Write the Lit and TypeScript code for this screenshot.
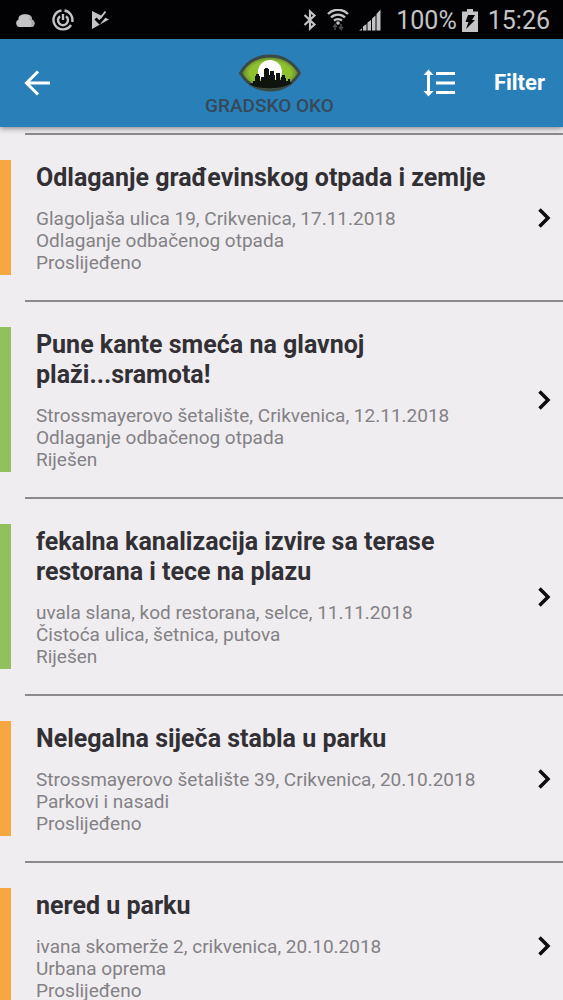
import { LitElement, html, css } from "lit";
import { customElement, property } from "lit/decorators.js";
import { classMap } from "lit/directives/class-map.js";

interface Report {
  title: string;
  place: string;
  category: string;
  status: string;
}

const REPORTS: Report[] = [
  {
    title: "Odlaganje građevinskog otpada i zemlje",
    place: "Glagoljaša ulica 19, Crikvenica, 17.11.2018",
    category: "Odlaganje odbačenog otpada",
    status: "Proslijeđeno",
  },
  {
    title: "Pune kante smeća na glavnoj plaži...sramota!",
    place: "Strossmayerovo šetalište, Crikvenica, 12.11.2018",
    category: "Odlaganje odbačenog otpada",
    status: "Riješen",
  },
  {
    title: "fekalna kanalizacija izvire sa terase restorana i tece na plazu",
    place: "uvala slana, kod restorana, selce, 11.11.2018",
    category: "Čistoća ulica, šetnica, putova",
    status: "Riješen",
  },
  {
    title: "Nelegalna siječa stabla u parku",
    place: "Strossmayerovo šetalište 39, Crikvenica, 20.10.2018",
    category: "Parkovi i nasadi",
    status: "Proslijeđeno",
  },
  {
    title: "nered u parku",
    place: "ivana skomerže 2, crikvenica, 20.10.2018",
    category: "Urbana oprema",
    status: "Proslijeđeno",
  },
];

@customElement("status-bar")
export class StatusBar extends LitElement {
  static styles = css`
    :host {
      display: flex;
      flex: none;
      align-items: center;
      justify-content: space-between;
      height: 39px;
      padding: 3px 13px 0 14px;
      box-sizing: border-box;
      background: #020204;
      color: #c4c3c6;
      font-size: 25px;
      line-height: 30px;
    }
    .group {
      display: flex;
      align-items: center;
    }
    .notices {
      gap: 16px;
    }
    .system {
      gap: 10px;
    }
    .power {
      display: flex;
      align-items: center;
      gap: 5px;
      margin-left: 5px;
    }
    svg {
      display: block;
      fill: currentColor;
    }
  `;

  render() {
    return html`
      <div class="group notices">
        <svg width="22" height="24" viewBox="0 0 22 24" aria-hidden="true">
          <path d="M5 18a4 4 0 0 1-.5-7.500A4.500 4.500 0 0 1 7 6C8 5 14 5 15.500 6a5 5 0 0 1 2.500 4.500a4 4 0 0 1 0 7.500z" />
          <path d="M15.500 6a5 5 0 0 1 2.500 4.500a4 4 0 0 1 0 7.500h-2c3-3 1-7-.5-7z" fill="#a9a8ab" />
        </svg>
        <svg width="22" height="24" viewBox="0 0 22 24" aria-hidden="true">
          <g fill="none" stroke="currentColor" stroke-width="2.400">
            <path d="M9.500 1.500A9.500 9.500 0 1 0 19 16M20.200 13A9.500 9.500 0 0 0 12.500 1.500" />
            <path d="M8 7.200a5 5 0 1 0 6 0M11 5v6" />
          </g>
        </svg>
        <svg width="20" height="24" viewBox="0 0 20 24" aria-hidden="true">
          <path d="M2 2L19 10.500 2 20z" />
          <path d="M5.500 9.500l4 4 8-10" fill="none" stroke="#020204" stroke-width="3" />
          <path d="M10 9.500L15.500 2.500" fill="none" stroke="currentColor" stroke-width="2" />
        </svg>
      </div>
      <div class="group system">
        <svg width="14" height="24" viewBox="0 0 14 24" aria-hidden="true">
          <path
            d="M1.500 6l10 9.500L7 19.500V2.500l4.500 4L1.500 16"
            fill="none"
            stroke="currentColor"
            stroke-width="2.200"
          />
        </svg>
        <svg width="22" height="24" viewBox="0 0 22 24" aria-hidden="true">
          <g fill="none" stroke="currentColor" stroke-width="2.400">
            <path d="M1 5a14 14 0 0 1 20 0M4 8.500a10 10 0 0 1 14 0M7 11.700a6 6 0 0 1 8 0" />
          </g>
          <circle cx="11" cy="14" r="1.800" />
          <path
            d="M8 21v-5l-2 2M8 16l2 2M14 15v5l-2-2M14 20l2-2"
            fill="none"
            stroke="#4c4b4e"
            stroke-width="1.600"
          />
        </svg>
        <svg width="22" height="24" viewBox="0 0 22 24" aria-hidden="true">
          <path d="M0 21.500l3-2v2zM4 21.500v-4l3.500-2.500v6.500zM8.500 21.500v-8l3.500-2.500v10.500zM13 21.500V9.500l3.500-3v15zM17.500 21.500V5L21.500 0.500v21z" />
        </svg>
        <div class="power">
          <span>100%</span>
          <svg width="16" height="24" viewBox="0 0 16 24" aria-hidden="true">
            <path d="M5 0h6v2.500h5v20.500H0V2.500h5z" />
            <path d="M6 6h7l-3 5h3L4 20l2.500-7H3.500z" fill="#020204" />
          </svg>
        </div>
        <span>15:26</span>
      </div>
    `;
  }
}

@customElement("top-bar")
export class TopBar extends LitElement {
  static styles = css`
    :host {
      display: grid;
      flex: none;
      grid-template-columns: 1fr auto 1fr;
      align-items: center;
      height: 88px;
      padding: 0 18px 0 24px;
      background: #2980b9;
      box-shadow: 0 1px 6px rgba(0, 0, 0, 0.5);
      z-index: 1;
    }
    button {
      display: block;
      margin: 0;
      padding: 0;
      border: 0;
      background: none;
      color: #fff;
      font: 700 22px/28px Roboto, sans-serif;
      cursor: pointer;
    }
    svg {
      display: block;
    }
    .logo {
      display: flex;
      flex-direction: column;
      align-items: center;
      gap: 4px;
      margin: 3px 30px 0 0;
      color: #35495a;
      font: 500 19px/20px Roboto, sans-serif;
    }
    .actions {
      display: flex;
      align-items: center;
      justify-content: flex-end;
      gap: 38px;
    }
  `;

  render() {
    return html`
      <button type="button" aria-label="Natrag">
        <svg width="28" height="28" viewBox="0 0 28 28" fill="none" stroke="currentColor" stroke-width="3">
          <path d="M26 14H3M14 2.500L2.500 14 14 25.500" />
        </svg>
      </button>
      <div class="logo">
        <svg width="64" height="38" viewBox="0 0 64 38" aria-hidden="true">
          <defs>
            <radialGradient id="iris">
              <stop offset="0.700" stop-color="#8fc02e" />
              <stop offset="1" stop-color="#56782f" />
            </radialGradient>
          </defs>
          <path
            d="M2.500 19C9 8 19 2 32 2S55 8 61.500 19C55 30 45 36 32 36S9 30 2.500 19z"
            fill="url(#iris)"
            stroke="#3b4a48"
            stroke-width="3"
          />
          <circle cx="32" cy="18" r="12" fill="#fff" />
          <path
            d="M11 30l4-1v-2h2v-5h1v-2h3v2h1v5h1v-4h3v-8h1v-1h3v1h1v6h1v-4h4v4h1v5h1v-7h4v7h1v-3h1v-2h3v3h1v3h2v-2h2v3l2 1C44 36 20 36 11 30z"
            fill="#10140f"
          />
        </svg>
        <span>GRADSKO OKO</span>
      </div>
      <div class="actions">
        <button type="button" aria-label="Poredaj">
          <svg width="34" height="28" viewBox="0 0 34 28" fill="currentColor">
            <path d="M6.500 0.500L11.500 6H8v16h3.500L6.500 27.500 1.500 22H5V6H1.500z" />
            <path d="M14 3h19v3H14zM14 12.500h19v3H14zM14 22h19v3H14z" />
          </svg>
        </button>
        <button type="button">Filter</button>
      </div>
    `;
  }
}

@customElement("report-item")
export class ReportItem extends LitElement {
  @property({ attribute: false }) report!: Report;

  static styles = css`
    :host {
      display: block;
    }
    .row {
      display: block;
      color: inherit;
      text-decoration: none;
    }
    .row::before {
      content: "";
      display: block;
      margin-left: 25px;
      border-top: 2px solid #8c8a8d;
    }
    .body {
      display: flex;
      align-items: center;
      justify-content: space-between;
      gap: 36px;
      margin: 25px 0;
      padding: 3px 12px 1px 25px;
      border-left: 11px solid #f5a742;
    }
    .solved {
      border-left-color: #93c05f;
    }
    h2 {
      margin: 0 0 15px;
      color: #323034;
      font-size: 25px;
      font-weight: 700;
      line-height: 30px;
    }
    p {
      margin: 0;
      color: #838185;
      font-size: 19px;
      line-height: 22px;
    }
    svg {
      display: block;
      flex: none;
    }
  `;

  render() {
    const { title, place, category, status } = this.report;
    return html`
      <a class="row" href="#">
        <div class=${classMap({ body: true, solved: status === "Riješen" })}>
          <div>
            <h2>${title}</h2>
            <p>${place}</p>
            <p>${category}</p>
            <p>${status}</p>
          </div>
          <svg width="14" height="22" viewBox="0 0 14 22" fill="none" stroke="#0c0b0d" stroke-width="3.500" aria-hidden="true">
            <path d="M2.500 1.500L11 10l-8.500 8.500" />
          </svg>
        </div>
      </a>
    `;
  }
}

@customElement("app-root")
export class AppRoot extends LitElement {
  static styles = css`
    :host {
      display: flex;
      flex-direction: column;
      height: 100vh;
      background: #efedf0;
      font-family: Roboto, sans-serif;
    }
    .list {
      flex: 1;
      min-height: 0;
      margin: 0;
      padding: 6px 0 0;
      overflow-y: auto;
      scrollbar-width: none;
      list-style: none;
    }
  `;

  render() {
    return html`
      <status-bar></status-bar>
      <top-bar></top-bar>
      <ul class="list">
        ${REPORTS.map((report) => html`<li><report-item .report=${report}></report-item></li>`)}
      </ul>
    `;
  }
}
